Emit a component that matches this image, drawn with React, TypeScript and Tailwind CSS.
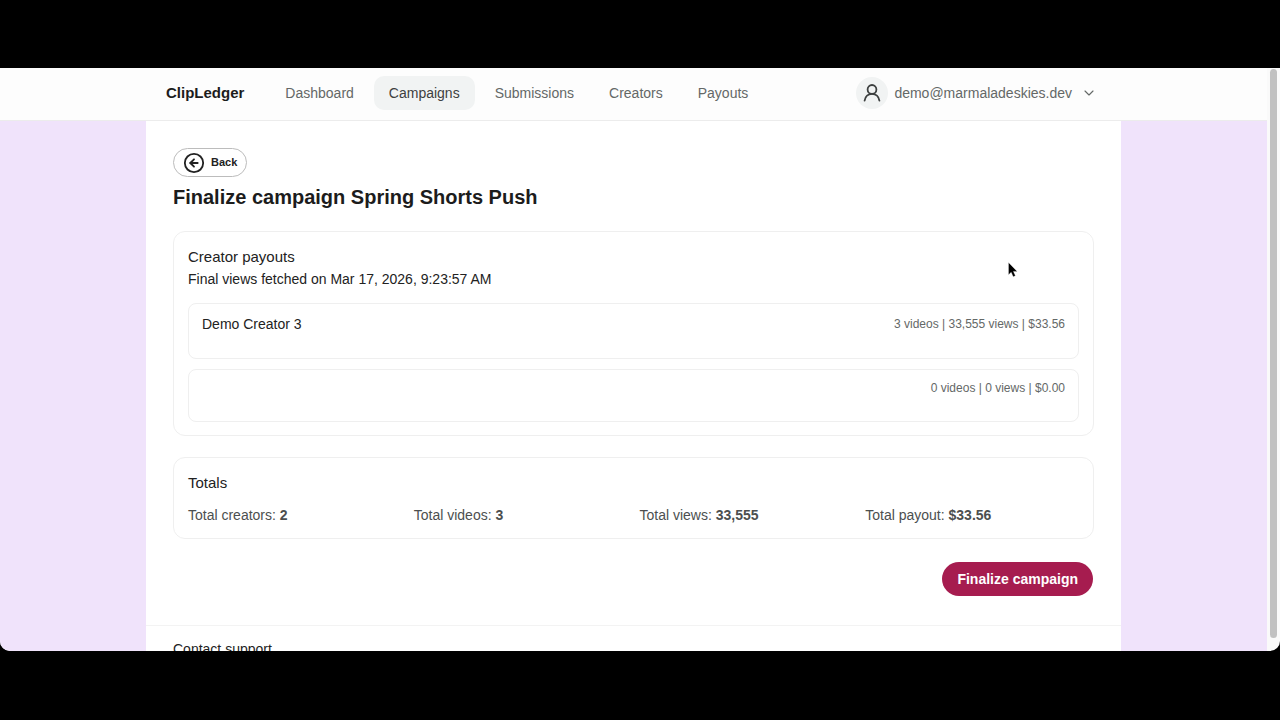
import { ChevronDown, CircleArrowLeft } from 'lucide-react';

const navItems = [
  { label: 'Dashboard', href: '#dashboard', active: false },
  { label: 'Campaigns', href: '#campaigns', active: true },
  { label: 'Submissions', href: '#submissions', active: false },
  { label: 'Creators', href: '#creators', active: false },
  { label: 'Payouts', href: '#payouts', active: false },
];

const payouts = [
  { id: 1, name: 'Demo Creator 3', summary: '3 videos | 33,555 views | $33.56' },
  { id: 2, name: '', summary: '0 videos | 0 views | $0.00' },
];

const totals = [
  { label: 'Total creators', value: '2' },
  { label: 'Total videos', value: '3' },
  { label: 'Total views', value: '33,555' },
  { label: 'Total payout', value: '$33.56' },
];

function UserIcon() {
  return (
    <svg
      className="h-5 w-5"
      viewBox="0 0 20 20"
      fill="none"
      stroke="currentColor"
      strokeWidth={1.8}
      strokeLinecap="round"
    >
      <circle cx="10" cy="6.4" r="4.4" />
      <path d="M2.6 17.600c.6-4 3.500-6.800 7.400-6.800s6.800 2.800 7.400 6.800" />
    </svg>
  );
}

function Cursor() {
  return (
    <svg
      className="pointer-events-none absolute right-[75px] top-[30px] h-[18px] w-3"
      viewBox="0 0 12 18"
      aria-hidden="true"
    >
      <path
        d="M2.500 0.500v12.200l2.700-2.400 2 4.400 2.200-.9-2-4.400h3.800z"
        fill="#000"
        stroke="#fff"
        strokeWidth="0.3"
      />
    </svg>
  );
}

function Header() {
  return (
    <header className="border-b border-[#ececec] bg-[#fdfdfd]">
      <div className="mx-auto flex h-[52px] w-full max-w-[975px] items-center px-5 pb-[2px]">
        <a href="#home" className="text-[15px] font-bold text-[#1c1c1c]">
          ClipLedger
        </a>
        <nav className="ml-[26px] flex items-center gap-[5px]">
          {navItems.map((item) => (
            <a
              key={item.label}
              href={item.href}
              className={`flex h-[34px] items-center rounded-[10px] px-[15px] text-[14px] ${
                item.active ? 'bg-[#f1f3f3] text-[#3d4040]' : 'text-[#646867]'
              }`}
            >
              {item.label}
            </a>
          ))}
        </nav>
        <button type="button" className="ml-auto flex items-center pr-1 text-[14px] text-[#646867]">
          <span className="mr-[6px] flex h-8 w-8 items-center justify-center rounded-full bg-[#f1f3f3] text-[#3d4040]">
            <UserIcon />
          </span>
          demo@marmaladeskies.dev
          <ChevronDown className="ml-[9px] h-4 w-4" strokeWidth={1.7} />
        </button>
      </div>
    </header>
  );
}

export default function App() {
  return (
    <div className="flex h-screen flex-col bg-black pb-[69px] pt-[68px] font-['Liberation_Sans',Arial,sans-serif]">
      <div className="flex min-h-0 flex-1 overflow-hidden rounded-b-[10px] bg-[#fafafa]">
        <div className="flex min-w-0 flex-1 flex-col overflow-hidden bg-[#f0e3fb]">
          <Header />

          <main className="mx-auto w-full max-w-[975px] flex-1 bg-white text-[#222]">
            <div className="px-[27px] pt-[27px]">
              <button
                type="button"
                className="flex h-[29px] items-center gap-[6px] rounded-full border border-[#bcbcbc] px-[9px] text-[11px] font-bold"
              >
                <CircleArrowLeft className="h-[22px] w-[22px]" strokeWidth={2} />
                Back
              </button>
              <h1 className="mt-2 text-[20px] font-bold leading-6 text-[#1c1c1c]">
                Finalize campaign Spring Shorts Push
              </h1>

              {/* Creator payouts */}
              <section className="relative mt-[22px] rounded-xl border border-[#efefef] px-[14px] py-[13px]">
                <h2 className="text-[15px] leading-6">Creator payouts</h2>
                <p className="text-[14px] leading-5">Final views fetched on Mar 17, 2026, 9:23:57 AM</p>
                <ul className="mt-[14px] flex flex-col gap-[10px]">
                  {payouts.map((payout) => (
                    <li
                      key={payout.id}
                      className="flex items-center justify-between rounded-lg border border-[#efefef] px-[13px] pb-6 pt-[10px]"
                    >
                      <span className="text-[14px] leading-5">{payout.name}</span>
                      <span className="text-[12px] leading-[17px] text-[#646867]">{payout.summary}</span>
                    </li>
                  ))}
                </ul>
                <Cursor />
              </section>

              {/* Totals */}
              <section className="mt-[21px] rounded-xl border border-[#efefef] px-[14px] py-[13px]">
                <h2 className="text-[15px] leading-6">Totals</h2>
                <div className="mt-[10px] grid grid-cols-4 gap-3 text-[14px] leading-5 text-[#4c4f4f]">
                  {totals.map((total) => (
                    <p key={total.label}>
                      {total.label}: <strong>{total.value}</strong>
                    </p>
                  ))}
                </div>
              </section>

              <div className="mt-[23px] flex justify-end pr-px">
                <button
                  type="button"
                  className="h-[34px] rounded-full bg-[#a61c4f] px-[15px] text-[14px] font-bold text-white"
                >
                  Finalize campaign
                </button>
              </div>
            </div>

            <footer className="mt-[29px] border-t border-[#f3f3f3] px-[27px] py-[11px]">
              <a href="#support" className="text-[14px] leading-5">
                Contact support
              </a>
            </footer>
          </main>
        </div>

        {/* Scrollbar */}
        <div className="flex w-[13px] justify-center pb-[13px] pt-px">
          <div className="w-[7px] rounded-full bg-[#c1c1c1]" />
        </div>
      </div>
    </div>
  );
}
